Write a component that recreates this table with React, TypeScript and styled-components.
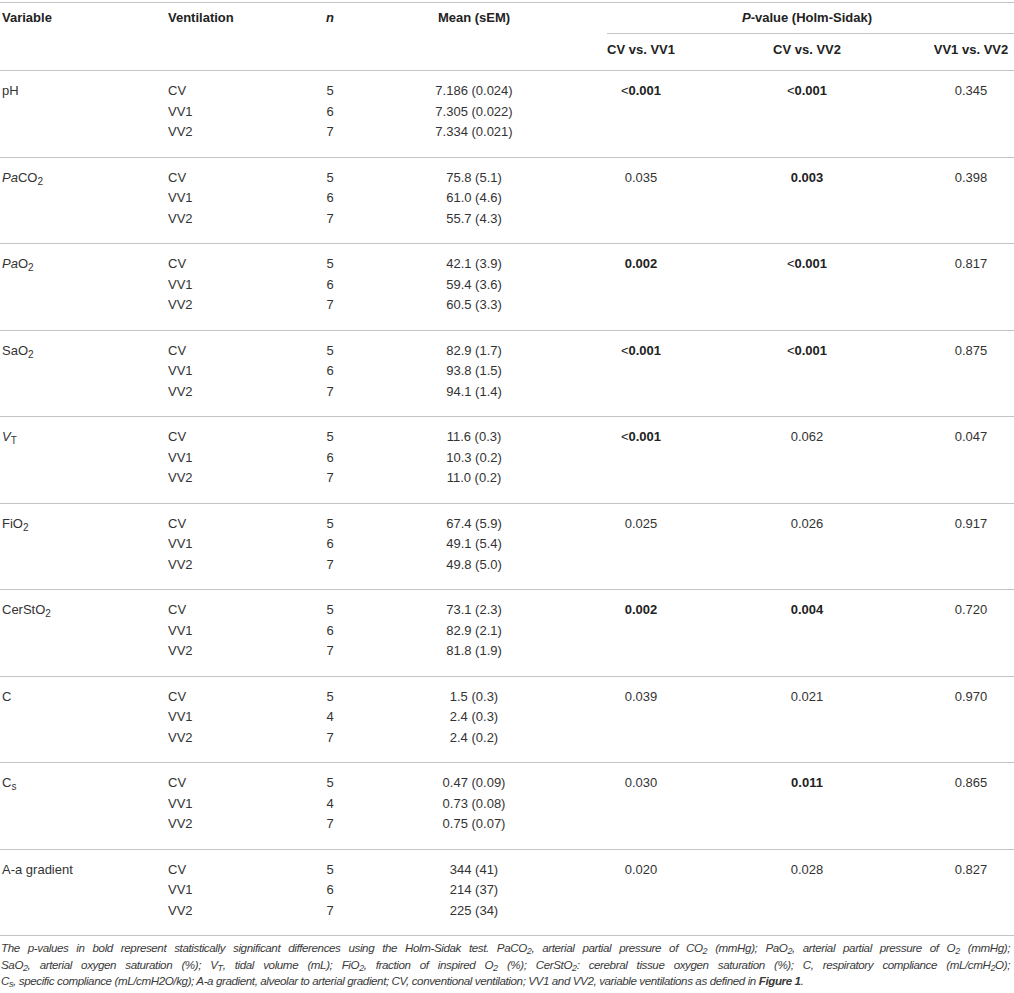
import React from "react";
import styled, { createGlobalStyle } from "styled-components";

const Global = createGlobalStyle`
  html, body { margin: 0; padding: 0; background: #ffffff; }
  body { font-family: "Liberation Sans", Arial, sans-serif; color: #333333; }
`;

const COLS = "165px 143px 44px 244px 90px 242px 86px";
const LINE = "1px solid #c4c4c4";

const Page = styled.div`
  width: 1014px;
  padding-top: 2px;
`;

const Table = styled.div`
  border-top: ${LINE};
  font-size: 13px;
`;

const Header = styled.div`
  display: grid;
  grid-template-columns: ${COLS};
  padding: 4.5px 0 10px;
  border-bottom: ${LINE};
  font-weight: bold;
  color: #222222;
`;

const Group = styled.div`
  display: grid;
  grid-template-columns: ${COLS};
  padding: 10.25px 0 13.75px;
  border-bottom: ${LINE};
`;

const Cell = styled.div<{ $col: number; $align?: "left" | "center"; $pad?: number }>`
  grid-column: ${(p) => p.$col};
  text-align: ${(p) => (p.$align === "center" ? "center" : "left")};
  padding-left: ${(p) => p.$pad ?? 0}px;
  height: 20.5px;
  line-height: 20.5px;
  white-space: nowrap;
`;

const SpanHead = styled.div`
  grid-column: 5 / 8;
  margin-left: 11px;
  padding-right: 7px;
  height: 20px;
  line-height: 20px;
  padding-bottom: 5.5px;
  border-bottom: ${LINE};
  text-align: center;
  white-space: nowrap;
`;

const SubHead = styled(Cell)`
  margin-top: 6px;
  height: 20px;
  line-height: 20px;
`;

const Bold = styled.span`
  font-weight: bold;
  color: #222222;
`;

const Lt = styled.span`
  font-weight: normal;
`;

const Sub = styled.sub`
  font-size: 10px;
  line-height: 0;
  vertical-align: -3px;
`;

const It = styled.i``;

const Caption = styled.div`
  font-family: "Liberation Sans", Arial, sans-serif;
  font-style: italic;
  font-size: 11.6px;
  letter-spacing: -0.4px;
  color: #3a3a3a;
  padding: 4px 4px 0 1px;
`;

const CapLine = styled.div<{ $last?: boolean }>`
  line-height: 16.5px;
  white-space: nowrap;
  text-align: ${(p) => (p.$last ? "left" : "justify")};
  text-align-last: ${(p) => (p.$last ? "left" : "justify")};
`;

const CapSub = styled.sub`
  font-size: 9px;
  line-height: 0;
  vertical-align: -2px;
`;

type PVal = { v: string; b?: boolean };
type Row = { vent: string; n: string; mean: string };
type Grp = { name: React.ReactNode; rows: Row[]; p: PVal[] };

const std = (n: [string, string, string], m: [string, string, string]): Row[] => [
  { vent: "CV", n: n[0], mean: m[0] },
  { vent: "VV1", n: n[1], mean: m[1] },
  { vent: "VV2", n: n[2], mean: m[2] },
];

const groups: Grp[] = [
  {
    name: "pH",
    rows: std(["5", "6", "7"], ["7.186 (0.024)", "7.305 (0.022)", "7.334 (0.021)"]),
    p: [{ v: "<0.001", b: true }, { v: "<0.001", b: true }, { v: "0.345" }],
  },
  {
    name: (
      <>
        <It>Pa</It>CO<Sub>2</Sub>
      </>
    ),
    rows: std(["5", "6", "7"], ["75.8 (5.1)", "61.0 (4.6)", "55.7 (4.3)"]),
    p: [{ v: "0.035" }, { v: "0.003", b: true }, { v: "0.398" }],
  },
  {
    name: (
      <>
        <It>Pa</It>O<Sub>2</Sub>
      </>
    ),
    rows: std(["5", "6", "7"], ["42.1 (3.9)", "59.4 (3.6)", "60.5 (3.3)"]),
    p: [{ v: "0.002", b: true }, { v: "<0.001", b: true }, { v: "0.817" }],
  },
  {
    name: (
      <>
        SaO<Sub>2</Sub>
      </>
    ),
    rows: std(["5", "6", "7"], ["82.9 (1.7)", "93.8 (1.5)", "94.1 (1.4)"]),
    p: [{ v: "<0.001", b: true }, { v: "<0.001", b: true }, { v: "0.875" }],
  },
  {
    name: (
      <>
        <It>V</It>
        <Sub>T</Sub>
      </>
    ),
    rows: std(["5", "6", "7"], ["11.6 (0.3)", "10.3 (0.2)", "11.0 (0.2)"]),
    p: [{ v: "<0.001", b: true }, { v: "0.062" }, { v: "0.047" }],
  },
  {
    name: (
      <>
        FiO<Sub>2</Sub>
      </>
    ),
    rows: std(["5", "6", "7"], ["67.4 (5.9)", "49.1 (5.4)", "49.8 (5.0)"]),
    p: [{ v: "0.025" }, { v: "0.026" }, { v: "0.917" }],
  },
  {
    name: (
      <>
        CerStO<Sub>2</Sub>
      </>
    ),
    rows: std(["5", "6", "7"], ["73.1 (2.3)", "82.9 (2.1)", "81.8 (1.9)"]),
    p: [{ v: "0.002", b: true }, { v: "0.004", b: true }, { v: "0.720" }],
  },
  {
    name: "C",
    rows: std(["5", "4", "7"], ["1.5 (0.3)", "2.4 (0.3)", "2.4 (0.2)"]),
    p: [{ v: "0.039" }, { v: "0.021" }, { v: "0.970" }],
  },
  {
    name: (
      <>
        C<Sub>s</Sub>
      </>
    ),
    rows: std(["5", "4", "7"], ["0.47 (0.09)", "0.73 (0.08)", "0.75 (0.07)"]),
    p: [{ v: "0.030" }, { v: "0.011", b: true }, { v: "0.865" }],
  },
  {
    name: "A-a gradient",
    rows: std(["5", "6", "7"], ["344 (41)", "214 (37)", "225 (34)"]),
    p: [{ v: "0.020" }, { v: "0.028" }, { v: "0.827" }],
  },
];

const renderP = (p: PVal) => {
  if (!p.b) return p.v;
  if (p.v.startsWith("<"))
    return (
      <Bold>
        <Lt>&lt;</Lt>
        {p.v.slice(1)}
      </Bold>
    );
  return <Bold>{p.v}</Bold>;
};

export default function App() {
  return (
    <Page>
      <Global />
      <Table>
        <Header>
          <Cell $col={1} $pad={2}>Variable</Cell>
          <Cell $col={2} $pad={3}>Ventilation</Cell>
          <Cell $col={3} $align="center">
            <It>n</It>
          </Cell>
          <Cell $col={4} $align="center">Mean (sEM)</Cell>
          <SpanHead>
            <It>P</It>-value (Holm-Sidak)
          </SpanHead>
          <SubHead $col={5} $align="center">CV vs. VV1</SubHead>
          <SubHead $col={6} $align="center">CV vs. VV2</SubHead>
          <SubHead $col={7} $align="center">VV1 vs. VV2</SubHead>
        </Header>
        {groups.map((g, gi) => (
          <Group key={gi}>
            {g.rows.map((r, ri) => (
              <React.Fragment key={ri}>
                {ri === 0 && (
                  <Cell $col={1} $pad={2}>
                    {g.name}
                  </Cell>
                )}
                <Cell $col={2} $pad={3}>{r.vent}</Cell>
                <Cell $col={3} $align="center">{r.n}</Cell>
                <Cell $col={4} $align="center">{r.mean}</Cell>
                {ri === 0 &&
                  g.p.map((p, pi) => (
                    <Cell key={pi} $col={5 + pi} $align="center">
                      {renderP(p)}
                    </Cell>
                  ))}
              </React.Fragment>
            ))}
          </Group>
        ))}
      </Table>
      <Caption>
        <CapLine>
          The p-values in bold represent statistically significant differences using the Holm-Sidak test. PaCO
          <CapSub>2</CapSub>, arterial partial pressure of CO<CapSub>2</CapSub> (mmHg); PaO<CapSub>2</CapSub>,
          arterial partial pressure of O<CapSub>2</CapSub> (mmHg);
        </CapLine>
        <CapLine>
          SaO<CapSub>2</CapSub>, arterial oxygen saturation (%); V<CapSub>T</CapSub>, tidal volume (mL); FiO
          <CapSub>2</CapSub>, fraction of inspired O<CapSub>2</CapSub> (%); CerStO<CapSub>2</CapSub>: cerebral
          tissue oxygen saturation (%); C, respiratory compliance (mL/cmH<CapSub>2</CapSub>O);
        </CapLine>
        <CapLine $last>
          C<CapSub>s</CapSub>, specific compliance (mL/cmH2O/kg); A-a gradient, alveolar to arterial gradient; CV,
          conventional ventilation; VV1 and VV2, variable ventilations as defined in <b>Figure 1</b>.
        </CapLine>
      </Caption>
    </Page>
  );
}
